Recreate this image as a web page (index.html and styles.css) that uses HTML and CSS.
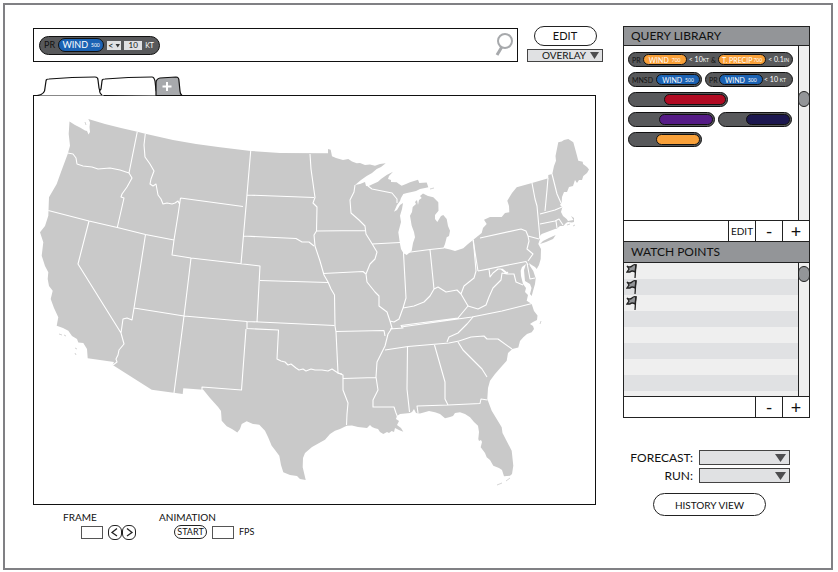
FILE: index.html
```html
<!DOCTYPE html>
<html lang="en">
<head>
<meta charset="utf-8">
<meta name="viewport" content="width=device-width, initial-scale=1">
<title>Weather query</title>
<link rel="stylesheet" href="styles.css">
</head>
<body>
<div class="frame">
  <main class="main">
    <div class="topbar">
      <form class="search" role="search">
        <div class="chip chip-large">
          <span class="dark">PR</span>
          <span class="pill blue">WIND <small>500</small></span>
          <span class="operator"><select aria-label="Comparison"><option>&lt;</option></select></span>
          <input class="amount" type="text" value="10" aria-label="Value">
          <small class="unit">KT</small>
        </div>
        <input class="query" type="text" aria-label="Query">
        <button class="search-button" type="button" aria-label="Search">
          <svg width="20" height="26" viewBox="0 0 20 26"><circle cx="11" cy="9" r="7" fill="none" stroke="#a7a9ac" stroke-width="2"/><path d="M7.500 15.500L3 23" stroke="#a7a9ac" stroke-width="3"/></svg>
        </button>
      </form>
      <div class="map-actions">
        <button class="round-button" type="button">EDIT</button>
        <span class="dropdown overlay"><select aria-label="Overlay"><option>OVERLAY</option></select></span>
      </div>
    </div>

    <nav class="tabs" aria-label="Maps">
      <button type="button" aria-label="Map 1"><svg width="68" height="20" viewBox="0 0 68 20"><path d="M0 19.500C6 19 8 16 8 12L9 5Q9 3 12 3Q35 1 58 1Q61 1 61 4L62 12Q63 18 68 19.500"/></svg></button>
      <button type="button" aria-label="Map 2"><svg width="64" height="20" viewBox="0 0 64 20"><path d="M4 19Q0 16 3 13L4 5Q4 3 7 3Q30 1 54 1Q56 1 57 5L58 14Q59 18 64 19.500"/></svg></button>
      <button type="button" aria-label="Add map"><svg width="28" height="20" viewBox="0 0 28 20"><path class="add" d="M1 19.500V7Q1 3 5 2L21 1Q24 1 24 5L25 15Q25 18 27 19.500Z"/><path class="plus" d="M12 6V15M7.500 10.500H16.500"/></svg></button>
    </nav>

    <div class="map">
      <svg viewBox="34 97 561 408" role="img" aria-label="Map of the United States">
        <path class="land" d="M69.500 122.500L75 126 80 128.500 85 131.500 87 132 88.500 135.500 90 133 89.500 128 90 123.500 88.300 120 105 125 121 129 137.300 132.700 145.300 134.700 173 141 196 145 220 148.300 250.700 152 280 154 328 154.300V150L330.700 150.700 332 157.300 336 159 343 161 348.300 160 352 162.500 356.700 164.300 360 164 365 166 370 165.500 375 166.700 380 165 385.700 164.300 381 168 376.700 170 372 174 366.700 177 361 181 355 186 360 185 365 183 366 187 368.300 187.300 373 185 378 182.700 381 180 386.700 176 393 172.700 389 177 388 180 391 181 391 183 396.700 183.300 399 185 401.700 186.700 406 185 410 183.300 418 180.700 419.300 184 426.700 183.500 428.300 188.300 425 189 420 190 416 192 411.700 193 407 194 403.300 195 401 199 400 202 397 206 394 212.700 397 211 400 206 403 204 402 210 400 216.700 401 223 398.300 233.300 400 245 401 250 403.300 254 406.700 256 411.700 251.700 413 244 415 238.300 414 233 411.700 226.700 410 216.700 412 213 412.700 208 416 205 415 203 417 201 418 206 419 201 421.700 199 420 197 423 194.500 428 197 433.300 198.300 438.300 203.300 438.500 211.700 435 216 435 220 437.300 223 441 217 443.300 216 446.700 220 448 227 450 231.700 449 237 446.700 238.300 445 245 443.300 249 450 250.500 455 252 463.300 249.300 468 245 473.300 240.700 481.700 234 483 229 486.700 225 484 220.700 490 218 501.700 218 505 214 509.300 213.300 509 207 507.300 201.700 512 194 516.700 188.300 532 184 548.300 179.300V176L552.300 175 554 167 556 161.700 555.500 157 558.300 143.300 561.700 142.500 564 141 568.300 140 573.300 143.300 576 153 578.300 161.700 582.700 162.700 583 165 587 168 589 170.500 587 174 583.300 177 582 181 579 181 577 184 575 181 573 187 569 188 567 193 564 193 562 198 561.700 203.300 560 206 562.300 208.300 561 213 563 217 566.700 220 568 222 573.500 221 571 217 574 219 574 223 571.700 223.500 568 223 566 224 563.300 227 560 227 557 229.500 555 230 541.700 235 539 238 540 240 538.300 245 541 250 540.700 260 539 266 536.700 270 535 268 531.700 266 529 264 530 267 533.300 272 535.700 279.300 535 285 533 292 531.700 297 530 295 531.500 289 530 285 525 282 524.500 277 524 271 526 265 522 268 520.700 271.700 521 277 523 285 526 289 525 293 528 296 526.700 301.700 531.700 305 534 312 537.500 316.500 537 321 533 323 530 325 533 327 534 330 531.700 333.300 527 335 523.300 338.300 520 342 518.300 348.500 512.300 350 508 354 506.700 361.700 502 367 495 375 490 381.700 488 389 487.300 400 491.700 411.700 501.700 428.300 502.500 434 511.700 451.700 513.300 466.700 512 475 510 476.700 504 477.300 502 471 499 469 493.300 466.700 490 461 486.700 458.300 485 454 480.700 448.300 482 443 481 441 479 442 478.300 440 479 433 478 426.700 474 423 470 418.300 465 415 460 413.300 455 414 453 417 450 418 445 419.300 440 415 435 413.300 429 412 420 414.500 416 414 414 410 412 413 410 414 400 415 397 417 396 420 399 422 397 426 401 429 403.300 432.700 399 431 395 429 394 433 391.700 432 389 434 387 433 383.300 435 380 433 378 430 375 429.300 372 428 370 426 367 429 358 428 352 426.500 346.700 426.700 340 430 335 431.700 330 435 325 440.700 312 448 305 454 303 459 302.700 468.300 305.700 481 300 480 297 477 290 476 283.300 473.300 281 466 279.300 456.700 275 451 271.700 446.700 268 438 265 431.700 259.300 425.700 253 425 246.700 422.300 241.700 425 240 430 237.300 433.500 232 430 226.700 427.300 221.700 421.700 221 412 218.300 408.300 210 399 203.300 390.700 183.300 389.300 182.700 395 151.700 390.700 112.700 366 114 363 87.700 359.300 87 350 83.300 344 78.300 343.500 77 340 72 337 68.300 331.700 63 329 56.700 326.700 58.300 318.300 54 309 50.700 300 52.700 291.700 49 287 47.700 280 48.300 273.300 45 267 41.700 256.700 43.300 243.300 40 233.300 45 227 48.300 216.700 49 198.300 56.700 185 61 173 67.700 155 70 146.700 68.700 135Z"/>
        <path class="land" d="M540 245L543 242 549 239 555.700 236 553 240 546 243Z"/>
        <path class="islands" d="M59 335l3 1M64 336l2 1M75 349l2 1M75 354l1 2M567 226l3-1M573 227l2-1M430 190l4-1M86 126l-1-3M497 486l5-2M506 482l4-3M540 325l1-3"/>
        <g class="borders">
          <path d="M67.700 154L73 155 76 159 77 165 83 167 92 168 98 170 110 169 120 171 129 174M137.300 132.700L129 174 132 179 127 188 122 195 121 198 124 199 117.300 228.500M48.300 211.500L89 222 117.300 228.500 145.500 235.500 174 241M145.300 134.700L144 146 145 158 150 165 154 172 151 180 150 185 153 187 156 185 158 196 161 200 163 205 167 204 172 205 175 204 178 202 179.500 205M180.500 199L178 216 174 241 172 256 191 259M180.500 199L243 207.500M89 222L78 265 121 334M145.500 235.500L134 309 132 321 127 319 123 320 121 334 124 345 119 351 118 356 116 360 117 363 113 366M134 309L184 317M191 259L188.500 280 184 317 174 394M191 259L260 267 257 323M184 317L247 322.500 334.500 326.500M241 265L246 207.500 250.700 152M246.500 196L314 198.500M243.500 237L296 239.500 302 243 309 243 314 247M260 281.500L328 283.500M247 322.500L247 330M247 329.500L278.500 331 277 360 281 362 285 363 288 366 291 365 296 369 299 371 303 370 306 372 311 370 315 371 322 371 328 372 332 370 338 374 342 375M246 330L241.500 391 202 388 202 391"/>
          <path d="M310 155L311 170 315 198.500 313 204 317 208 316.500 232 314 236 315 247 320 262 324 276 328 283 331 290 334.500 296 335 327 336 333 338 374 343 376 343 391 348 404 347 415 346.500 426M316.500 232L365.500 231.500M323 274.500L363 272.500 366 275M336 332.500L384 331.500 385 337M343 379.500L376 378.500M355 186L354 193 350 201 351 214 359 221 365 227 366 235 371 243 377 253 375 260 370 265 366 275 367 283 375 293 379 297 379 307 387 313 390 322 392 329 388 335 385 347 380 357 377 363 376 378 378 391 373 401 373 408 394 408 396 414 398 419M368 187L372 190 392 194 397 200 397 204M372 245L400 243.500M403.500 254L406 299 403 309 399 320 394 323 390 322M403 254L430 250.500 444 249M430 250.500L434 290 430 297 424 303 414 307 403 309M434 290L438 288 446 293 457 291 461 295 464 287 474 279 476 272 473.300 240.700M461 295L468 307 458 319 401 326.500 403 329 390 330M401 328L472 318 502 312 532 304.500M385 351L408 347.500 449 344 459 342"/>
          <path d="M407.500 348L407 390 409.500 413M434.500 346L445 383 445 400 448 406 417 407 418 414M448 406L480 404.500 481 400 487.500 401M458 343L463 351 482 370 487 378M459 342L471 338 484 337 487 340 498 340 512 350M447 343L449 338 458 334 467 325 473 318M468 307L478 310 486 306 489 298 493 289 501 281 502 274 507 275 514 275 516 283 523 286M478 272L526 262.500 528 266M473 240.700L478 272M480 239L521 230 526 232 528 237 529 242 527 250 533 255 528 262M528 237L539 240M532 184L535 200 537 207 540 240M548 179L547 191 545 212M540 215L555 211 562 208M540 225L555 222 559 220 563 226M556 222L557 229M552 175L557 195 561 204M527 264L530 280 535 279M478 272L489 270 490 278 493 274 498 270 501 270 507 275M502 270L507 274 508 273"/>
        </g>
      </svg>
    </div>

    <div class="playback">
      <div class="group">
        <label for="frame-no">FRAME</label>
        <div class="controls">
          <input id="frame-no" class="box" type="text">
          <span class="steps"><button class="step" type="button" aria-label="Previous frame"><svg width="14" height="15" viewBox="0 0 14 15"><path d="M9 3.500L4 7.500L9 11"/></svg></button><button class="step" type="button" aria-label="Next frame"><svg width="14" height="15" viewBox="0 0 14 15"><path d="M5 3.500L10 7.500L5 11"/></svg></button></span>
        </div>
      </div>
      <div class="group">
        <span>ANIMATION</span>
        <div class="controls">
          <button class="start" type="button">START</button>
          <input id="fps" class="box" type="text">
          <label class="fps" for="fps">FPS</label>
        </div>
      </div>
    </div>
  </main>

  <aside class="side">
    <div class="panels">
      <section>
        <h2>QUERY LIBRARY</h2>
        <div class="scroller library">
          <div class="chips">
            <div class="chip"><span class="dark">PR</span><span class="pill orange w44">WIND <small>700</small></span><span>&lt; 10<small>KT</small></span><span class="dark">&amp;</span><span class="pill orange w48">T. PRECIP<small>700</small></span><span>&lt; 0.1<small>IN</small></span></div>
            <div class="pair">
              <div class="chip"><span class="dark">MNSD</span><span class="pill blue w44">WIND <small>500</small></span></div>
              <div class="chip c88"><span class="dark">PR</span><span class="pill blue w44">WIND <small>500</small></span><span>&lt; 10 <small>KT</small></span></div>
            </div>
            <div class="chip c100"><span class="pill red w62"></span></div>
            <div class="pair">
              <div class="chip c87"><span class="pill purple w54"></span></div>
              <div class="chip c74"><span class="pill navy w44"></span></div>
            </div>
            <div class="chip c74"><span class="pill orange w44"></span></div>
          </div>
          <div class="scrollbar"><span class="thumb thumb-mid"></span></div>
        </div>
        <div class="footer"><button class="edit" type="button">EDIT</button><button type="button" aria-label="Remove query">-</button><button type="button" aria-label="Add query">+</button></div>
      </section>
      <section>
        <h2>WATCH POINTS</h2>
        <div class="scroller">
          <ul class="points">
            <li><svg class="flag" viewBox="0 0 12 16"><path d="M1 3Q4 5 6 3T10 2L9 9Q6 7 4 9L1 9L3 6Z"/><path d="M10 1L9 15"/></svg></li>
            <li><svg class="flag" viewBox="0 0 12 16"><path d="M1 3Q4 5 6 3T10 2L9 9Q6 7 4 9L1 9L3 6Z"/><path d="M10 1L9 15"/></svg></li>
            <li><svg class="flag" viewBox="0 0 12 16"><path d="M1 3Q4 5 6 3T10 2L9 9Q6 7 4 9L1 9L3 6Z"/><path d="M10 1L9 15"/></svg></li>
            <li></li><li></li><li></li><li></li><li></li>
          </ul>
          <div class="scrollbar"><span class="thumb"></span></div>
        </div>
        <div class="footer"><button type="button" aria-label="Remove watch point">-</button><button type="button" aria-label="Add watch point">+</button></div>
      </section>
    </div>
    <div class="run-form">
      <label for="forecast">FORECAST:</label>
      <span class="dropdown"><select id="forecast"></select></span>
      <label for="run">RUN:</label>
      <span class="dropdown"><select id="run"></select></span>
    </div>
    <button class="round-button history" type="button">HISTORY VIEW</button>
  </aside>
</div>
</body>
</html>
```
FILE: styles.css
```css
* { box-sizing: border-box; }

body {
  margin: 3px 5px 2px 3px;
  background: #fff;
  color: #111;
  font: 11px/14px Lato, "Open Sans", sans-serif;
}

button, input, select {
  margin: 0;
  padding: 0;
  border: 1px solid #222;
  border-radius: 0;
  background: #fff;
  color: inherit;
  font: inherit;
}

select { appearance: none; }
svg { display: block; }
small { font-size: 5px; }

.frame {
  display: grid;
  grid-template-columns: minmax(0, 1fr) 187px;
  gap: 20px;
  min-height: calc(100vh - 5px);
  padding: 21px 21px 20px 28px;
  border: 2px solid #808084;
}

/* Query bar */
.topbar { display: flex; gap: 9px; }

.search {
  display: flex;
  flex: 1;
  align-items: center;
  height: 34px;
  margin-top: 2px;
  padding: 0 3px 0 5px;
  border: 1px solid #111;
}

.query { flex: 1; min-width: 0; border: 0; }
.search-button { border: 0; background: none; }

.map-actions {
  display: flex;
  flex-direction: column;
  align-items: center;
  gap: 3px;
  width: 76px;
}

.round-button {
  width: 63px;
  height: 20px;
  border-radius: 10px;
}

.dropdown { position: relative; display: block; }

.dropdown select {
  display: block;
  width: 100%;
  height: 15px;
  padding-left: 14px;
  border-color: #444;
  background: #e0e1e3;
}

.dropdown::after {
  content: "";
  position: absolute;
  top: 4px;
  right: 4px;
  width: 11px;
  height: 8px;
  background: #4d4d4f;
  clip-path: polygon(0 0, 100% 0, 50% 100%);
  pointer-events: none;
}

.overlay { width: 100%; }
.overlay select { height: 13px; font-size: 10px; line-height: 11px; }
.overlay::after { top: 3px; width: 9px; height: 7px; }

/* Query chips */
.chip {
  display: flex;
  align-items: center;
  justify-content: space-between;
  height: 15px;
  padding: 0 1px 0 3px;
  border: 1px solid #111;
  border-radius: 8px;
  background: #58595b;
  color: #fff;
  font-size: 7px;
  line-height: 10px;
  white-space: nowrap;
}

.dark { color: #111; }

.pill {
  display: flex;
  align-items: center;
  justify-content: center;
  gap: 3px;
  height: 11px;
  margin-left: auto;
  border: 1px solid #111;
  border-radius: 6px;
}

.blue { background: #1b62b3; }
.orange { background: #f9a13a; }
.red { background: #b10a22; }
.purple { background: #551b86; }
.navy { background: #1c174f; }

.w44 { width: 44px; }
.w48 { width: 48px; gap: 1px; }
.w54 { width: 54px; }
.w62 { width: 62px; }
.c74 { width: 74px; }
.c87 { width: 87px; }
.c88 { width: 88px; }
.c100 { width: 100px; }

.chip-large {
  gap: 3px;
  width: 121px;
  height: 19px;
  padding: 0 5px 0 4px;
  border-radius: 10px;
  font-size: 9px;
}

.chip-large .pill {
  flex: 1;
  height: 14px;
  border-radius: 7px;
}

.operator { position: relative; }

.operator select {
  display: block;
  width: 14px;
  height: 9px;
  padding-left: 1px;
  border: 0;
  background: #e0e1e3;
  color: #111;
  font-size: 9px;
  line-height: 9px;
}

.operator::after {
  content: "";
  position: absolute;
  top: 3px;
  right: 1px;
  width: 5px;
  height: 4px;
  background: #333;
  clip-path: polygon(0 0, 100% 0, 50% 100%);
}

.amount {
  width: 18px;
  height: 9px;
  border: 0;
  background: #e0e1e3;
  color: #111;
  font-size: 8px;
  text-align: center;
}

.unit { font-size: 7px; }

/* Map */
.tabs { display: flex; margin: 14px 0 0 4px; }
.tabs button { height: 19px; border: 0; background: none; }
.tabs button + button { margin-left: -7px; }
.tabs path { fill: #fff; stroke: #111; stroke-width: 1.2; }
.tabs .add { fill: #a7a9ac; }
.tabs .plus { stroke: #fff; stroke-width: 2; }

.map { margin-right: 7px; border: 1px solid #111; }
.map svg { width: 100%; height: auto; }
.land { fill: #c9c9c9; }
.islands { fill: none; stroke: #d5d5d5; }
.borders { fill: none; stroke: #fff; stroke-width: 1.1; stroke-linejoin: round; }

/* Playback */
.playback { display: flex; gap: 23px; padding: 5px 0 0 30px; font-size: 10px; }
.group > label, .group > span { display: block; }
.controls { display: flex; align-items: center; gap: 5px; padding: 1px 0 0 15px; }
.group:first-child .controls { padding-left: 18px; }
.box { width: 22px; height: 13px; border-color: #555; }
.steps { display: flex; }
.step { width: 14px; height: 15px; border-radius: 6px; }
.step svg { margin: -1px; fill: none; stroke: #222; stroke-width: 1.3; }
.start { width: 33px; height: 14px; border-radius: 8px; font-size: 9px; line-height: 12px; }
.fps { font-size: 9px; }

/* Side panels */
.side { display: flex; flex-direction: column; }
.panels { border: 1px solid #222; }

h2 {
  margin: 0;
  padding-left: 7px;
  border-bottom: 1px solid #222;
  background: #939598;
  font-size: 12px;
  font-weight: 400;
  line-height: 18px;
}

section + section h2 { border-top: 1px solid #222; line-height: 20px; }

.scroller { display: grid; grid-template-columns: minmax(0, 1fr) 11px; }
.library { min-height: 174px; }
.scrollbar { position: relative; border-left: 1px solid #222; background: #efefef; }

.thumb {
  position: absolute;
  top: 3px;
  left: -1px;
  width: 12px;
  height: 16px;
  border: 1px solid #222;
  border-radius: 6px;
  background: #939598;
}

.thumb-mid { top: 45px; }

.chips {
  display: flex;
  flex-direction: column;
  align-items: flex-start;
  gap: 5px;
  padding: 6px 4px;
}

.chips > .chip:first-child { width: 165px; }
.chips > .chip:first-child .pill { margin-left: 0; }
.chips > .chip:first-child { padding-right: 3px; }
.pair { display: flex; gap: 3px; }
.pair:nth-child(2) .chip:first-child { width: 74px; }
.c88 { padding-right: 6px; }
.c88 .pill { margin-left: 0; }

.footer { display: flex; justify-content: flex-end; height: 21px; border-top: 1px solid #222; }

.footer button {
  width: 27px;
  border-width: 0 0 0 1px;
  font-size: 18px;
  line-height: 18px;
}

.footer .edit { font-size: 10px; }

.points {
  margin: 0;
  padding: 0 0 5px;
  background: #efefef;
  list-style: none;
}

.points li { height: 16px; }
.points li:nth-child(even) { background: #e0e1e3; }

.flag { width: 12px; height: 16px; margin-left: 2px; fill: #939598; stroke: #222; stroke-width: 1.3; }

.run-form {
  display: grid;
  grid-template-columns: 1fr 91px;
  gap: 3px 6px;
  margin: 32px 20px 10px 0;
  font-size: 12px;
  line-height: 15px;
  text-align: right;
}

.history { width: 113px; height: 23px; margin-left: 30px; border-radius: 12px; font-size: 10px; }
```
